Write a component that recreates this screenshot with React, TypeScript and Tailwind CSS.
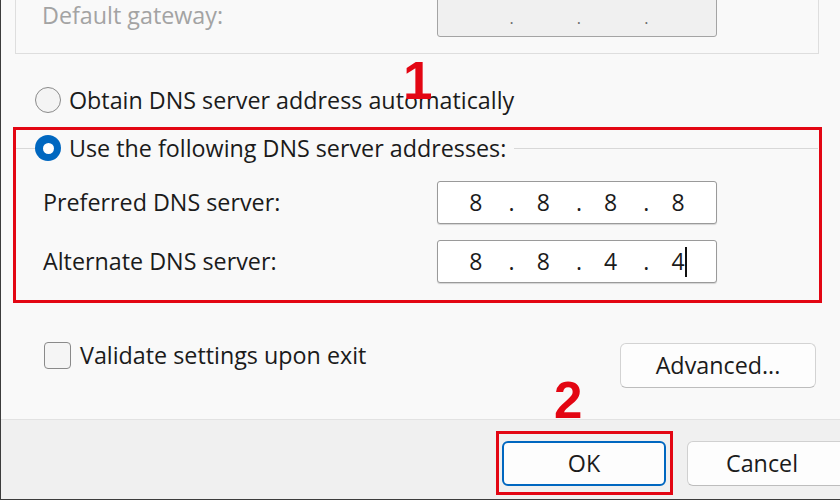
import React from 'react';

const Ip = ({ parts, disabled, caret }: { parts: string[]; disabled?: boolean; caret?: boolean }) => {
  const cells: string[] = [];
  parts.forEach((p, i) => {
    cells.push(p);
    if (i < parts.length - 1) cells.push('.');
  });
  return (
    <div
      className={`w-[280px] h-[43px] rounded-[3px] border flex items-center pl-[21px] ${
        disabled ? 'bg-[#f0f0f0] border-[#a4a4a4] text-[#6a6a6a]' : 'bg-white border-[#9a9a9a] text-[#1b1b1b] shadow-[0_1px_1px_rgba(0,0,0,0.15)]'
      }`}
    >
      {cells.map((c, i) => (
        <span
          key={i}
          className={`w-[33.7px] text-center relative ${c === '.' ? 'pl-[4px]' : ''} ${disabled ? 'text-[16px] mt-[4px]' : 'text-[23px]'}`}
        >
          {c}
          {caret && i === cells.length - 1 && (
            <span className="absolute left-[24px] top-[3px] w-[2px] h-[30px] bg-[#111]" />
          )}
        </span>
      ))}
    </div>
  );
};

const Radio = ({ checked }: { checked?: boolean }) =>
  checked ? (
    <span className="w-[26px] h-[26px] rounded-full bg-[#0067c0] flex items-center justify-center shrink-0">
      <span className="w-[11px] h-[11px] rounded-full bg-white" />
    </span>
  ) : (
    <span className="w-[26px] h-[26px] rounded-full border-[1.5px] border-[#8a8a8a] bg-[#f4f4f4] shrink-0" />
  );

export default function App() {
  return (
    <div className="w-[840px] h-[500px] overflow-hidden relative flex flex-col bg-[#f9f9f9] border-l border-b border-[#3c3c3c] text-[23.3px] text-[#1b1b1b] font-['Open_Sans','Noto_Sans',sans-serif]">
      {/* IP group (cut off at top) */}
      <div className="-mt-[26px] ml-[14px] w-[804px] border border-[#dedede] pt-[19px] pb-[16px] pl-[26px] flex items-center">
        <span className="w-[395px] text-[#a3a3a3]">Default gateway:</span>
        <Ip parts={['', '', '', '']} disabled />
      </div>

      <div className="mt-[33px] pl-[34px] h-[26px] flex items-center gap-[8px]">
        <Radio />
        <span>Obtain DNS server address automatically</span>
      </div>

      {/* DNS group, highlighted */}
      <div className="mt-[14px] ml-[12px] w-[809px] h-[176px] border-[3px] border-[#e30613] flex flex-col">
        <div className="mt-[5px] h-[26px] flex items-center">
          <span className="w-[19px] h-px bg-[#d8d8d8]" />
          <Radio checked />
          <span className="ml-[8px]">Use the following DNS server addresses:</span>
          <span className="flex-1 h-px bg-[#d8d8d8] ml-[8px] mr-[1px]" />
        </div>
        <div className="mt-[20px] h-[43px] flex items-center pl-[27px]">
          <span className="w-[394px]">Preferred DNS server:</span>
          <Ip parts={['8', '8', '8', '8']} />
        </div>
        <div className="mt-[16px] h-[43px] flex items-center pl-[27px]">
          <span className="w-[394px]">Alternate DNS server:</span>
          <Ip parts={['8', '8', '4', '4']} caret />
        </div>
      </div>

      <div className="mt-[39px] flex justify-between items-start pl-[43px] pr-[24px]">
        <div className="h-[27px] flex items-center gap-[9px]">
          <span className="w-[27px] h-[27px] rounded-[4px] border-[1.5px] border-[#8a8a8a] bg-[#f5f5f5]" />
          <span>Validate settings upon exit</span>
        </div>
        <button className="mt-[1px] w-[196px] h-[45px] rounded-[6px] border border-[#d3d3d3] border-b-[#bdbdbd] bg-[#fdfdfd]">
          Advanced...
        </button>
      </div>

      {/* button bar */}
      <div className="mt-[31px] flex-1 border-t border-[#e2e2e2] bg-[#f0f0f0] flex items-start pl-[495px] pt-[11px] gap-[14px]">
        <div className="border-[3px] border-[#e30613] pt-[7px] pb-[6px] pl-[3px] pr-[4px]">
          <button className="w-[164px] h-[45px] rounded-[6px] border-2 border-[#0067c0] bg-[#fdfdfd]">OK</button>
        </div>
        <button className="mt-[10px] w-[160px] h-[45px] shrink-0 rounded-[6px] border border-[#d0d0d0] border-b-[#bdbdbd] bg-[#fdfdfd] pr-[10px]">
          Cancel
        </button>
      </div>

      {/* step markers */}
      <span className="absolute left-[402px] top-[54px] text-[53px] leading-none font-bold text-[#e30613] font-['Liberation_Sans',sans-serif]">
        1
      </span>
      <span className="absolute left-[553px] top-[375px] text-[51px] leading-none font-bold text-[#e30613] font-['Liberation_Sans',sans-serif]">
        2
      </span>
    </div>
  );
}
